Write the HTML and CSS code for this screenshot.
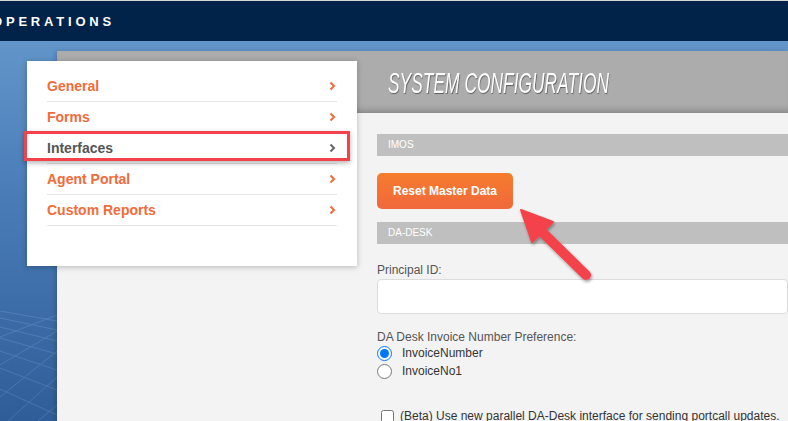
FILE: index.html
```html
<!DOCTYPE html>
<html lang="en">
<head>
    <meta charset="UTF-8">
    <title>System Configuration</title>
    <link rel="stylesheet" href="styles.css">
</head>
<body>
    <header class="topbar">
        <span class="brand">OPERATIONS</span>
    </header>

    <div class="stage">
        <div class="side">
            <svg class="grid" width="57" height="110" viewBox="0 0 57 110">
                <g stroke="#9dbde3" stroke-width="1" fill="none" opacity="0.22">
                    <path d="M0 0 L57 10"/>
                    <path d="M0 7 L57 19"/>
                    <path d="M0 16 L57 30"/>
                    <path d="M0 27 L57 43"/>
                    <path d="M0 40 L57 59"/>
                    <path d="M0 57 L57 79"/>
                    <path d="M0 78 L57 104"/>
                    <path d="M0 26 L57 4"/>
                    <path d="M0 54 L57 20"/>
                    <path d="M0 86 L57 40"/>
                    <path d="M8 110 L57 66"/>
                    <path d="M38 110 L57 94"/>
                </g>
            </svg>
        </div>

        <div class="panel">
            <div class="panel-head">
                <h1 class="title"><span>SYSTEM CONFIGURATION</span></h1>
            </div>
            <div class="panel-body">
                <div class="section-bar">IMOS</div>
                <button class="btn-orange">Reset Master Data</button>
                <div class="section-bar bar-da">DA-DESK</div>

                <label class="field-label" for="principalId">Principal ID:</label>
                <input type="text" id="principalId" class="text-input">

                <div class="field-label pref-label">DA Desk Invoice Number Preference:</div>
                <label class="radio-row"><input type="radio" name="invPref" checked> InvoiceNumber</label>
                <label class="radio-row"><input type="radio" name="invPref"> InvoiceNo1</label>

                <label class="check-row"><input type="checkbox"> (Beta) Use new parallel DA-Desk interface for sending portcall updates.</label>
            </div>
        </div>

        <!-- Menu de configuracao -->
        <nav class="menu">
            <ul>
                <li><a href="#">General</a><svg class="chev" width="7" height="10" viewBox="0 0 7 10"><path d="M1.5 1.5 L5 5 L1.5 8.5"/></svg></li>
                <li><a href="#">Forms</a><svg class="chev" width="7" height="10" viewBox="0 0 7 10"><path d="M1.5 1.5 L5 5 L1.5 8.5"/></svg></li>
                <li class="active"><a href="#">Interfaces</a><svg class="chev" width="7" height="10" viewBox="0 0 7 10"><path d="M1.5 1.5 L5 5 L1.5 8.5"/></svg><span class="highlight"></span></li>
                <li><a href="#">Agent Portal</a><svg class="chev" width="7" height="10" viewBox="0 0 7 10"><path d="M1.5 1.5 L5 5 L1.5 8.5"/></svg></li>
                <li><a href="#">Custom Reports</a><svg class="chev" width="7" height="10" viewBox="0 0 7 10"><path d="M1.5 1.5 L5 5 L1.5 8.5"/></svg></li>
            </ul>
        </nav>

        <svg class="arrow" width="90" height="90" viewBox="0 0 90 90">
            <defs>
                <filter id="arrowShadow" x="-30%" y="-30%" width="160%" height="160%">
                    <feDropShadow dx="1" dy="2" stdDeviation="1.5" flood-color="#000" flood-opacity="0.35"/>
                </filter>
            </defs>
            <g filter="url(#arrowShadow)" fill="#f4424b" stroke="#f4424b">
                <line x1="28" y1="28" x2="76" y2="75" stroke-width="10" stroke-linecap="round"/>
                <polygon points="11,10 43,22 22,42" stroke-width="2" stroke-linejoin="round"/>
            </g>
        </svg>
    </div>
</body>
</html>
```

FILE: styles.css
```css
body {
    margin: 0;
    font-family: 'Liberation Sans', Arial, sans-serif;
    background: #2d5a94;
    height: 421px;
    overflow: hidden;
}

.topbar {
    height: 40px;
    border-top: 1px solid #d6d6d6;
    background: #01234a;
    display: flex;
    align-items: center;
    overflow: hidden;
}

.brand {
    margin-left: -8px;
    color: #fff;
    font-weight: bold;
    font-size: 13px;
    letter-spacing: 3.8px;
}

.stage {
    position: relative;
    display: flex;
    padding-top: 10px;
    height: 370px;
    background: linear-gradient(#6295c9, #4a7db8 40%, #2f5d97);
}

.side {
    width: 57px;
    flex-shrink: 0;
    display: flex;
    align-items: flex-end;
}

.grid {
    display: block;
}

.panel {
    flex: 1;
    background: #f3f3f3;
    box-shadow: -2px 0 4px rgba(0,0,0,0.15);
    overflow: hidden;
}

.panel-head {
    height: 62px;
    background: #acacac;
    box-shadow: inset 0 -7px 7px -5px rgba(0,0,0,0.25);
    display: flex;
    align-items: center;
    padding-left: 331px;
}

.title {
    margin: 0;
    padding-top: 2px;
    font-weight: normal;
    font-size: 29px;
    font-style: italic;
    color: #fff;
    text-shadow: 1px 1px 1px rgba(0,0,0,0.45);
    white-space: nowrap;
}
.title span {
    display: inline-block;
    transform: scaleX(0.6);
    transform-origin: left center;
}

.panel-body {
    padding: 21px 0 0 320px;
    color: #555;
    font-size: 12px;
}

.section-bar {
    height: 22px;
    line-height: 22px;
    background: #bfbfbf;
    color: #fff;
    font-size: 10px;
    padding-left: 11px;
}
.bar-da {
    margin-top: 13px;
}

.btn-orange {
    display: block;
    margin-top: 17px;
    width: 136px;
    height: 36px;
    border: none;
    border-radius: 5px;
    background: linear-gradient(#f67c2e, #f0683b);
    color: #fff;
    font-family: inherit;
    font-weight: bold;
    font-size: 12px;
    cursor: pointer;
}

.field-label {
    display: block;
    margin-top: 19px;
    line-height: 14px;
    color: #555;
}
.pref-label {
    margin-top: 16px;
}

.text-input {
    display: block;
    margin-top: 2px;
    width: 100%;
    height: 35px;
    box-sizing: border-box;
    border: 1px solid #dcdcdc;
    border-radius: 4px;
    background: #fff;
}

.radio-row {
    display: flex;
    align-items: center;
    height: 18px;
    color: #333;
}
.radio-row input {
    margin: 0 10px 0 0;
    width: 15px;
    height: 15px;
}

.check-row {
    display: flex;
    align-items: center;
    height: 18px;
    margin-top: 27px;
    color: #333;
}
.check-row input {
    margin: 0 6px 0 4px;
    width: 13px;
    height: 13px;
}

/* Menu */
.menu {
    position: absolute;
    left: 27px;
    top: 20px;
    width: 330px;
    height: 205px;
    box-sizing: border-box;
    padding: 10px 20px 0;
    background: #fff;
    box-shadow: 0 1px 6px rgba(0,0,0,0.25);
}

.menu ul {
    list-style: none;
    margin: 0;
    padding: 0;
}

.menu li {
    position: relative;
    height: 30px;
    border-bottom: 1px solid #e4e4e4;
    display: flex;
    justify-content: space-between;
    align-items: center;
}

.menu a {
    color: #f26b3a;
    font-weight: bold;
    font-size: 14px;
    text-decoration: none;
}

.chev {
    fill: none;
    stroke: #f26b3a;
    stroke-width: 2;
    margin-right: 1px;
}

.menu li.active a {
    color: #555;
}
.menu li.active .chev {
    stroke: #666;
}

.highlight {
    position: absolute;
    left: -23px;
    right: -13px;
    top: -2px;
    bottom: 2px;
    border: 3px solid #f4424b;
    box-shadow: 0 2px 5px rgba(0,0,0,0.3);
}

.arrow {
    position: absolute;
    left: 510px;
    top: 159px;
}
```
